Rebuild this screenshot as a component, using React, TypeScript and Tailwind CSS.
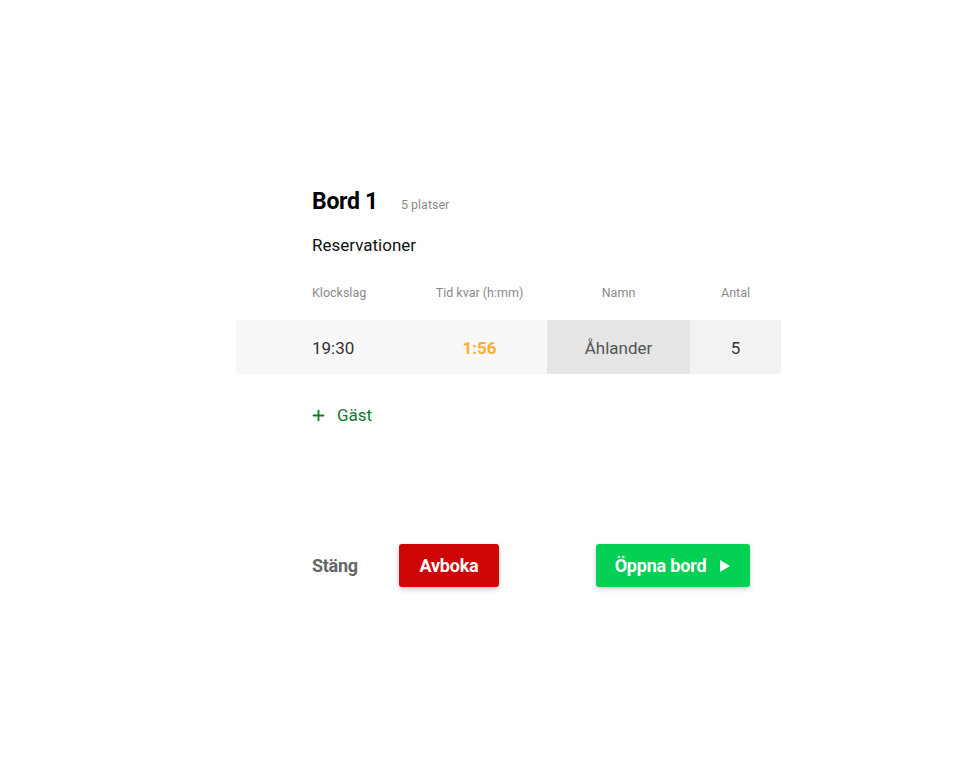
import { Plus } from "lucide-react";

const font = { fontFamily: "Roboto, 'Liberation Sans', sans-serif" };

export default function App() {
  return (
    <div className="min-h-screen w-full bg-white text-black" style={font}>
      <div className="ml-[236px] w-[545px] pt-[187px]">
        {/* header */}
        <div className="flex items-baseline pl-[76px]">
          <h1 className="text-[23px] leading-[30px] font-bold tracking-[-0.3px] text-black">Bord 1</h1>
          <span className="ml-[23px] text-[12.5px] text-[#8a8a8a]">5 platser</span>
        </div>
        <h2 className="mt-[17px] pl-[76px] text-[17px] leading-[22px] text-[#111]">Reservationer</h2>

        {/* table */}
        <div className="mt-[29px] grid grid-cols-[176px_135px_143px_91px] text-[12.5px] text-[#8a8a8a] leading-[15px]">
          <div className="pl-[76px]">Klockslag</div>
          <div className="text-center">Tid kvar (h:mm)</div>
          <div className="text-center">Namn</div>
          <div className="text-center">Antal</div>
        </div>
        <div className="mt-[20px] grid h-[54px] grid-cols-[176px_135px_143px_91px] items-stretch text-[17px] text-[#333]">
          <div className="flex items-center bg-[#f8f8f8] pl-[76px] pt-[3px]">19:30</div>
          <div className="flex items-center justify-center bg-[#f8f8f8] pt-[3px] font-bold text-[#fbb130]">1:56</div>
          <div className="flex items-center justify-center bg-[#e5e5e5] pt-[3px] text-[#555]">Åhlander</div>
          <div className="flex items-center justify-center bg-[#f2f2f2] pt-[3px]">5</div>
        </div>

        {/* add guest */}
        <button className="mt-[30px] ml-[74px] flex items-center gap-[10px] text-[17px] leading-[22px] text-[#0b7a2c]">
          <Plus size={17} strokeWidth={2.5} />
          <span>Gäst</span>
        </button>

        {/* actions */}
        <div className="mt-[118px] flex items-center pl-[76px]">
          <button className="w-[45px] text-left text-[18px] font-bold text-[#666] tracking-[-0.3px]">Stäng</button>
          <button className="ml-[42px] h-[43px] w-[100px] rounded-[3px] bg-[#cf0606] text-[18px] font-bold text-white shadow-[0_2px_5px_rgba(0,0,0,0.25)] tracking-[-0.2px]">
            Avboka
          </button>
          <button className="ml-[97px] flex h-[43px] w-[154px] items-center justify-center gap-[13px] rounded-[3px] bg-[#04d154] text-[18px] font-bold text-white shadow-[0_2px_5px_rgba(0,0,0,0.2)] tracking-[-0.2px]">
            <span>Öppna bord</span>
            <svg width="12" height="14" viewBox="0 0 12 14">
              <path d="M1 1 L11 7 L1 13 Z" fill="white" />
            </svg>
          </button>
        </div>
      </div>
    </div>
  );
}
